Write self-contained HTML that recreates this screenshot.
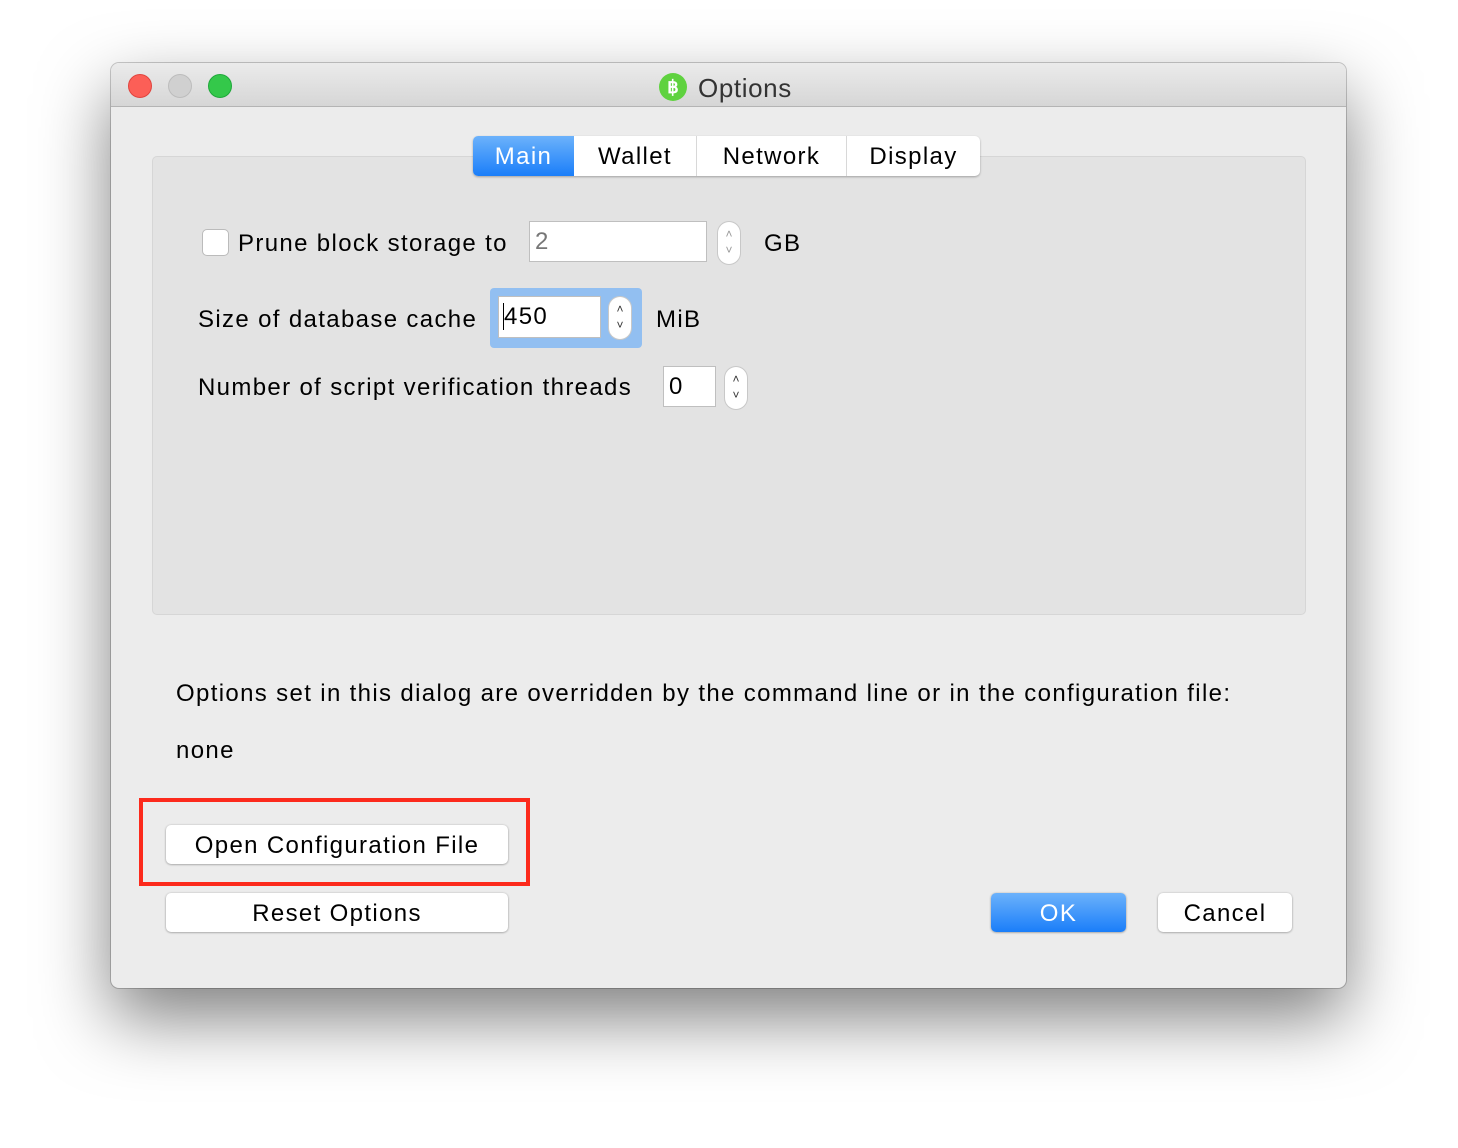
<!DOCTYPE html>
<html><head><style>
*{box-sizing:border-box;margin:0;padding:0}
body{width:1458px;height:1148px;background:#fff;font-family:"Liberation Sans",sans-serif;position:relative;overflow:hidden;letter-spacing:1.35px}
.win{position:absolute;left:111px;top:63px;width:1235px;height:925px;background:#ececec;border-radius:8px;box-shadow:0 30px 70px rgba(0,0,0,.5),0 0 0 1px rgba(0,0,0,.2);overflow:hidden}
.title{position:absolute;left:0;top:0;width:100%;height:44px;background:linear-gradient(#ebebeb,#d6d6d6);border-bottom:1px solid #b4b4b4}
.dot{position:absolute;top:11px;width:24px;height:24px;border-radius:50%}
.abs{position:absolute;white-space:nowrap;font-size:24px;color:#000}
.group{position:absolute;left:41px;top:93px;width:1154px;height:459px;background:#e3e3e3;border:1px solid #d6d6d6;border-radius:5px}
.tabs{position:absolute;left:362px;top:73px;height:40px;display:flex;background:#fff;border-radius:5px;box-shadow:0 1px 2px rgba(0,0,0,.3);overflow:hidden}
.tabs div{font-size:24px;line-height:42px;text-align:center;border-right:1px solid #d8d8d8}
.inp{position:absolute;background:#fff;border:1px solid #bfbfbf;font-size:24px;line-height:40px;padding-left:5px}
.spin{position:absolute;width:22px;height:42px;background:#fff;border-radius:11px;box-shadow:0 0 0 1px #c8c8c8;font-size:12px;text-align:center;line-height:16px;padding-top:4px;color:#333;letter-spacing:0}
.btn{position:absolute;background:#fff;border-radius:5px;box-shadow:0 0.5px 2px rgba(0,0,0,.4);font-size:24px;text-align:center;line-height:41px;height:39px}
</style></head><body>
<div class="win">
 <div class="title">
  <div class="dot" style="left:17px;background:#fc5f57;border:1px solid #e0443e"></div>
  <div class="dot" style="left:57px;background:#d0d0d0;border:1px solid #bcbcbc"></div>
  <div class="dot" style="left:97px;background:#34c84a;border:1px solid #1fa83a"></div>
  <div style="position:absolute;left:548px;top:10px;width:28px;height:28px;border-radius:50%;background:#5fd23f;color:#fff;font-size:18px;font-weight:bold;text-align:center;line-height:28px;letter-spacing:0">฿</div>
  <div class="abs" style="left:587px;top:10px;font-size:26px;color:#333;letter-spacing:0.6px">Options</div>
 </div>
 <div class="group"></div>
 <div class="tabs">
  <div style="width:101px;background:linear-gradient(#6cb2fb,#1a7ef9);color:#fff;border:none">Main</div>
  <div style="width:123px">Wallet</div>
  <div style="width:150px">Network</div>
  <div style="width:133px;border:none">Display</div>
 </div>
 <div style="position:absolute;left:91px;top:166px;width:27px;height:27px;background:#fff;border:1px solid #bbb;border-radius:5px"></div>
 <div class="abs" style="left:127px;top:167px">Prune block storage to</div>
 <div class="inp" style="left:418px;top:158px;width:178px;height:41px;color:#777">2</div>
 <div class="spin" style="left:607px;top:159px;color:#999">˄<br>˅</div>
 <div class="abs" style="left:653px;top:167px">GB</div>
 <div class="abs" style="left:87px;top:243px">Size of database cache</div>
 <div style="position:absolute;left:379px;top:225px;width:152px;height:60px;background:#92bff1;border-radius:4px"></div>
 <div class="inp" style="left:387px;top:233px;width:103px;height:42px;padding-left:4px"><span style="border-left:1.5px solid #000">450</span></div>
 <div class="spin" style="left:498px;top:234px">˄<br>˅</div>
 <div class="abs" style="left:545px;top:243px">MiB</div>
 <div class="abs" style="left:87px;top:311px">Number of script verification threads</div>
 <div class="inp" style="left:552px;top:303px;width:53px;height:41px">0</div>
 <div class="spin" style="left:614px;top:304px">˄<br>˅</div>
 <div class="abs" style="left:65px;top:617px">Options set in this dialog are overridden by the command line or in the configuration file:</div>
 <div class="abs" style="left:65px;top:674px">none</div>
 <div style="position:absolute;left:28px;top:735px;width:391px;height:88px;border:4px solid #fc2a1c"></div>
 <div class="btn" style="left:55px;top:762px;width:342px">Open Configuration File</div>
 <div class="btn" style="left:55px;top:830px;width:342px">Reset Options</div>
 <div class="btn" style="left:880px;top:830px;width:135px;background:linear-gradient(#6cb2fb,#1a7ef9);color:#fff">OK</div>
 <div class="btn" style="left:1047px;top:830px;width:134px">Cancel</div>
</div>
</body></html>
